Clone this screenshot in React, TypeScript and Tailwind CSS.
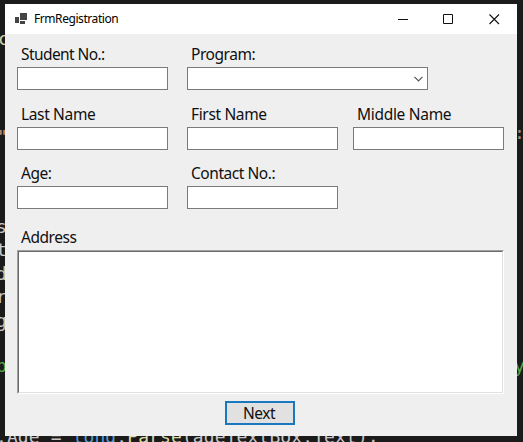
import type { ReactNode } from 'react';

const uiFont = "font-['Noto_Sans','Open_Sans',sans-serif]";

function Label({ children, className = '' }: { children: ReactNode; className?: string }) {
  return (
    <span className={`block h-[24px] whitespace-nowrap pl-1 text-[15.5px] leading-[22px] text-[#101010] ${className}`}>
      {children}
    </span>
  );
}

function Field({ label, tracking }: { label: string; tracking: string }) {
  return (
    <label className="block w-[151px]">
      <Label className={tracking}>{label}</Label>
      <input className="block h-[23px] w-full border border-[#7a7a7a] bg-white px-1 outline-none" />
    </label>
  );
}

function Caption() {
  return (
    <header className="flex h-[30px] items-center bg-white">
      <svg className="ml-[10px] h-[12px] w-[12px] shrink-0" viewBox="0 0 12 12" fill="#444" shapeRendering="crispEdges">
        <path d="M5 0h7v7H5zM0 4h4v6H0zM5 8h5v3H5z" />
      </svg>
      <span className="ml-[7px] text-[12px] leading-[30px] tracking-[-0.43px] text-black">FrmRegistration</span>
      <svg className="ml-auto mr-[17px] h-[11px] w-[102px]" viewBox="0 0 102 11" fill="none" stroke="#111">
        <path d="M0 5.5h10" />
        <path d="M45.5 .5h9v9h-9z" />
        <path d="M91.5 .5l9.5 9.5M101 .5L91.5 10" strokeWidth="1.1" />
      </svg>
    </header>
  );
}

function EditorBackdrop() {
  return (
    <div className="absolute inset-0 font-['DejaVu_Sans_Mono','Liberation_Mono',monospace] text-[18px] leading-[24px] text-[#c8c8c8]">
      <span className="absolute left-[-2px] top-[27px] text-[#d7cfa0]">c</span>
      <span className="absolute left-[-3px] top-[125px] text-[#c98f70]">"</span>
      <div className="absolute left-[-4px] top-[215px] flex flex-col leading-[23.4px]">
        <span>s</span>
        <span>t</span>
        <span>d</span>
        <span>r</span>
        <span>g</span>
      </div>
      <span className="absolute left-[-4px] top-[354px] text-[#57A64A]">b</span>
      <span className="absolute left-[514px] top-[121px] text-[#b08b7b]">:</span>
      <span className="absolute left-[514px] top-[354px] text-[#57A64A]">y</span>
      <div className="absolute left-[-4px] top-[425px] whitespace-pre tracking-[0.1px]">
        .Age = <span className="text-[#569cd6]">long</span>.<span className="text-[#dcdcaa]">Parse</span>(ageTextBox.Text);
      </div>
    </div>
  );
}

export default function App() {
  return (
    <div className={`relative h-[442px] w-[523px] overflow-hidden bg-[#1b1b1c] ${uiFont}`}>
      <EditorBackdrop />
      <main className="absolute left-[5px] top-[4px] flex h-[432px] w-[512px] flex-col bg-[#efefef]">
        <Caption />
        <form className="flex flex-col px-[12px] pt-[9px]" onSubmit={(e) => e.preventDefault()}>
          <div className="flex gap-[19px]">
            <Field label="Student No.:" tracking="tracking-[-0.58px]" />
            <div className="w-[241px]">
              <Label className="tracking-[-0.45px]">Program:</Label>
              <div className="flex h-[23px] items-center justify-end border border-[#7a7a7a] bg-white pr-[4px]">
                <svg className="h-[6px] w-[9px]" viewBox="0 0 9 6" fill="none" stroke="#555" strokeWidth="1.2">
                  <path d="M.5 .8l4 4 4-4" />
                </svg>
              </div>
            </div>
          </div>
          <div className="mt-[13px] flex">
            <Field label="Last Name" tracking="tracking-[-0.35px]" />
            <div className="ml-[19px]">
              <Field label="First Name" tracking="tracking-[-0.35px]" />
            </div>
            <div className="ml-[15px]">
              <Field label="Middle Name" tracking="tracking-[-0.3px]" />
            </div>
          </div>
          <div className="mt-[12px] flex gap-[19px]">
            <Field label="Age:" tracking="tracking-[-0.5px]" />
            <Field label="Contact No.:" tracking="tracking-[-0.45px]" />
          </div>
          <label className="mt-[17px] block w-[487px]">
            <Label className="tracking-[-0.45px]">Address</Label>
            <div className="h-[144px] border border-b-white border-l-[#a0a0a0] border-r-white border-t-[#a0a0a0]">
              <textarea className="block h-full w-full resize-none border border-b-[#e0e0e0] border-l-[#696969] border-r-[#e0e0e0] border-t-[#696969] bg-white outline-none" />
            </div>
          </label>
          <button className="ml-[208px] mt-[7px] h-[24px] w-[70px] border-2 border-[#1a78be] bg-[#e1e1e1] pr-[2px] text-[15.5px] leading-[20px] tracking-[-0.5px] text-[#101010]">
            Next
          </button>
        </form>
      </main>
    </div>
  );
}
